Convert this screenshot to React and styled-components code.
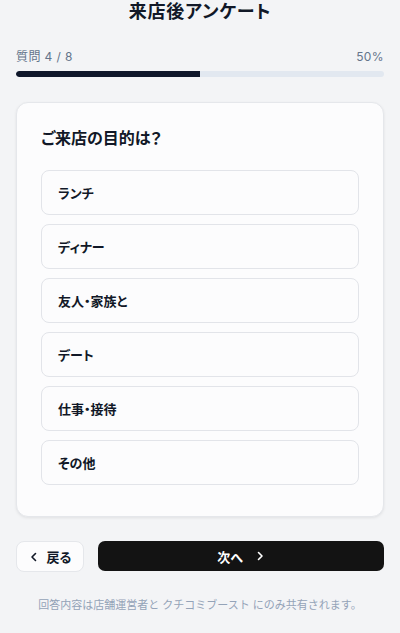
import React, { useState } from "react";
import styled, { createGlobalStyle } from "styled-components";

const GlobalStyle = createGlobalStyle`
  html, body {
    margin: 0;
    padding: 0;
    background: #f3f4f6;
  }
  body {
    font-family: "Inter", "Noto Sans CJK JP", "Noto Sans", sans-serif;
    font-feature-settings: "palt";
    color: #111827;
  }
`;

const Page = styled.div`
  width: 400px;
  height: 633px;
  box-sizing: border-box;
  padding: 0 16px;
  display: flex;
  flex-direction: column;
  overflow: hidden;
`;

const Title = styled.h1`
  margin: 0;
  font-size: 18px;
  font-weight: 700;
  text-align: center;
  line-height: 24px;
  letter-spacing: 0.8px;
`;

const ProgressHead = styled.div`
  margin-top: 25px;
  display: flex;
  justify-content: space-between;
  font-size: 12px;
  color: #64748b;
  line-height: 16px;
  letter-spacing: 0.4px;
`;

const Track = styled.div`
  margin-top: 6px;
  height: 6px;
  border-radius: 3px;
  background: #e2e8f0;
  overflow: hidden;
`;

const Fill = styled.div`
  height: 100%;
  background: #0f172a;
  border-radius: 3px 0 0 3px;
`;

const Card = styled.div`
  margin-top: 25px;
  background: #fcfcfd;
  border: 1px solid #e5e7eb;
  border-radius: 12px;
  box-shadow: 0 1px 3px rgba(0, 0, 0, 0.08);
  padding: 23px 24px 31px;
`;

const Question = styled.h2`
  margin: 0 0 20px;
  font-size: 16px;
  font-weight: 700;
  line-height: 24px;
`;

const Options = styled.div`
  display: flex;
  flex-direction: column;
  gap: 9px;
`;

const Option = styled.button`
  height: 45px;
  box-sizing: border-box;
  text-align: left;
  padding: 0 16px;
  border: 1px solid ${({ selected }) => (selected ? "#111827" : "#e2e4e9")};
  border-radius: 8px;
  background: #fcfcfd;
  font-family: inherit;
  font-feature-settings: inherit;
  font-size: 13px;
  font-weight: 600;
  color: #111827;
  cursor: pointer;
`;

const Actions = styled.div`
  margin-top: 24px;
  display: flex;
  gap: 14px;
`;

const BackButton = styled.button`
  width: 68px;
  height: 31px;
  display: flex;
  align-items: center;
  justify-content: center;
  gap: 8px;
  border: 1px solid #e5e7eb;
  border-radius: 8px;
  background: #fcfcfd;
  font-family: inherit;
  font-feature-settings: inherit;
  font-size: 13px;
  font-weight: 600;
  color: #111827;
  padding: 0;
`;

const NextButton = styled.button`
  flex: 1;
  height: 30px;
  display: flex;
  align-items: center;
  justify-content: center;
  gap: 12px;
  border: none;
  border-radius: 7px;
  background: #131313;
  color: #fff;
  font-family: inherit;
  font-feature-settings: inherit;
  font-size: 13px;
  font-weight: 600;
  padding: 0;
`;

const Note = styled.p`
  margin: 24px 0 0;
  text-align: center;
  font-size: 11px;
  font-feature-settings: normal;
  color: #94a3b8;
`;

const Chevron = ({ dir = "left" }) => (
  <svg width="10" height="10" viewBox="0 0 10 10" fill="none">
    <path
      d={dir === "left" ? "M6.5 1.5 3 5l3.5 3.5" : "M3.5 1.5 7 5 3.5 8.5"}
      stroke="currentColor"
      strokeWidth="1.6"
      strokeLinecap="round"
      strokeLinejoin="round"
    />
  </svg>
);

const choices = ["ランチ", "ディナー", "友人・家族と", "デート", "仕事・接待", "その他"];

export default function App() {
  const [picked, setPicked] = useState(null);
  const step = 4;
  const total = 8;
  const pct = 50;

  return (
    <>
      <GlobalStyle />
      <Page>
        <Title>来店後アンケート</Title>
        <ProgressHead>
          <span>質問 {step} / {total}</span>
          <span>{pct}%</span>
        </ProgressHead>
        <Track>
          <Fill style={{ width: `${pct}%` }} />
        </Track>
        <Card>
          <Question>ご来店の目的は？</Question>
          <Options>
            {choices.map((c) => (
              <Option key={c} selected={picked === c} onClick={() => setPicked(c)}>
                {c}
              </Option>
            ))}
          </Options>
        </Card>
        <Actions>
          <BackButton>
            <Chevron dir="left" />
            戻る
          </BackButton>
          <NextButton>
            次へ
            <Chevron dir="right" />
          </NextButton>
        </Actions>
        <Note>回答内容は店舗運営者と クチコミブースト にのみ共有されます。</Note>
      </Page>
    </>
  );
}
